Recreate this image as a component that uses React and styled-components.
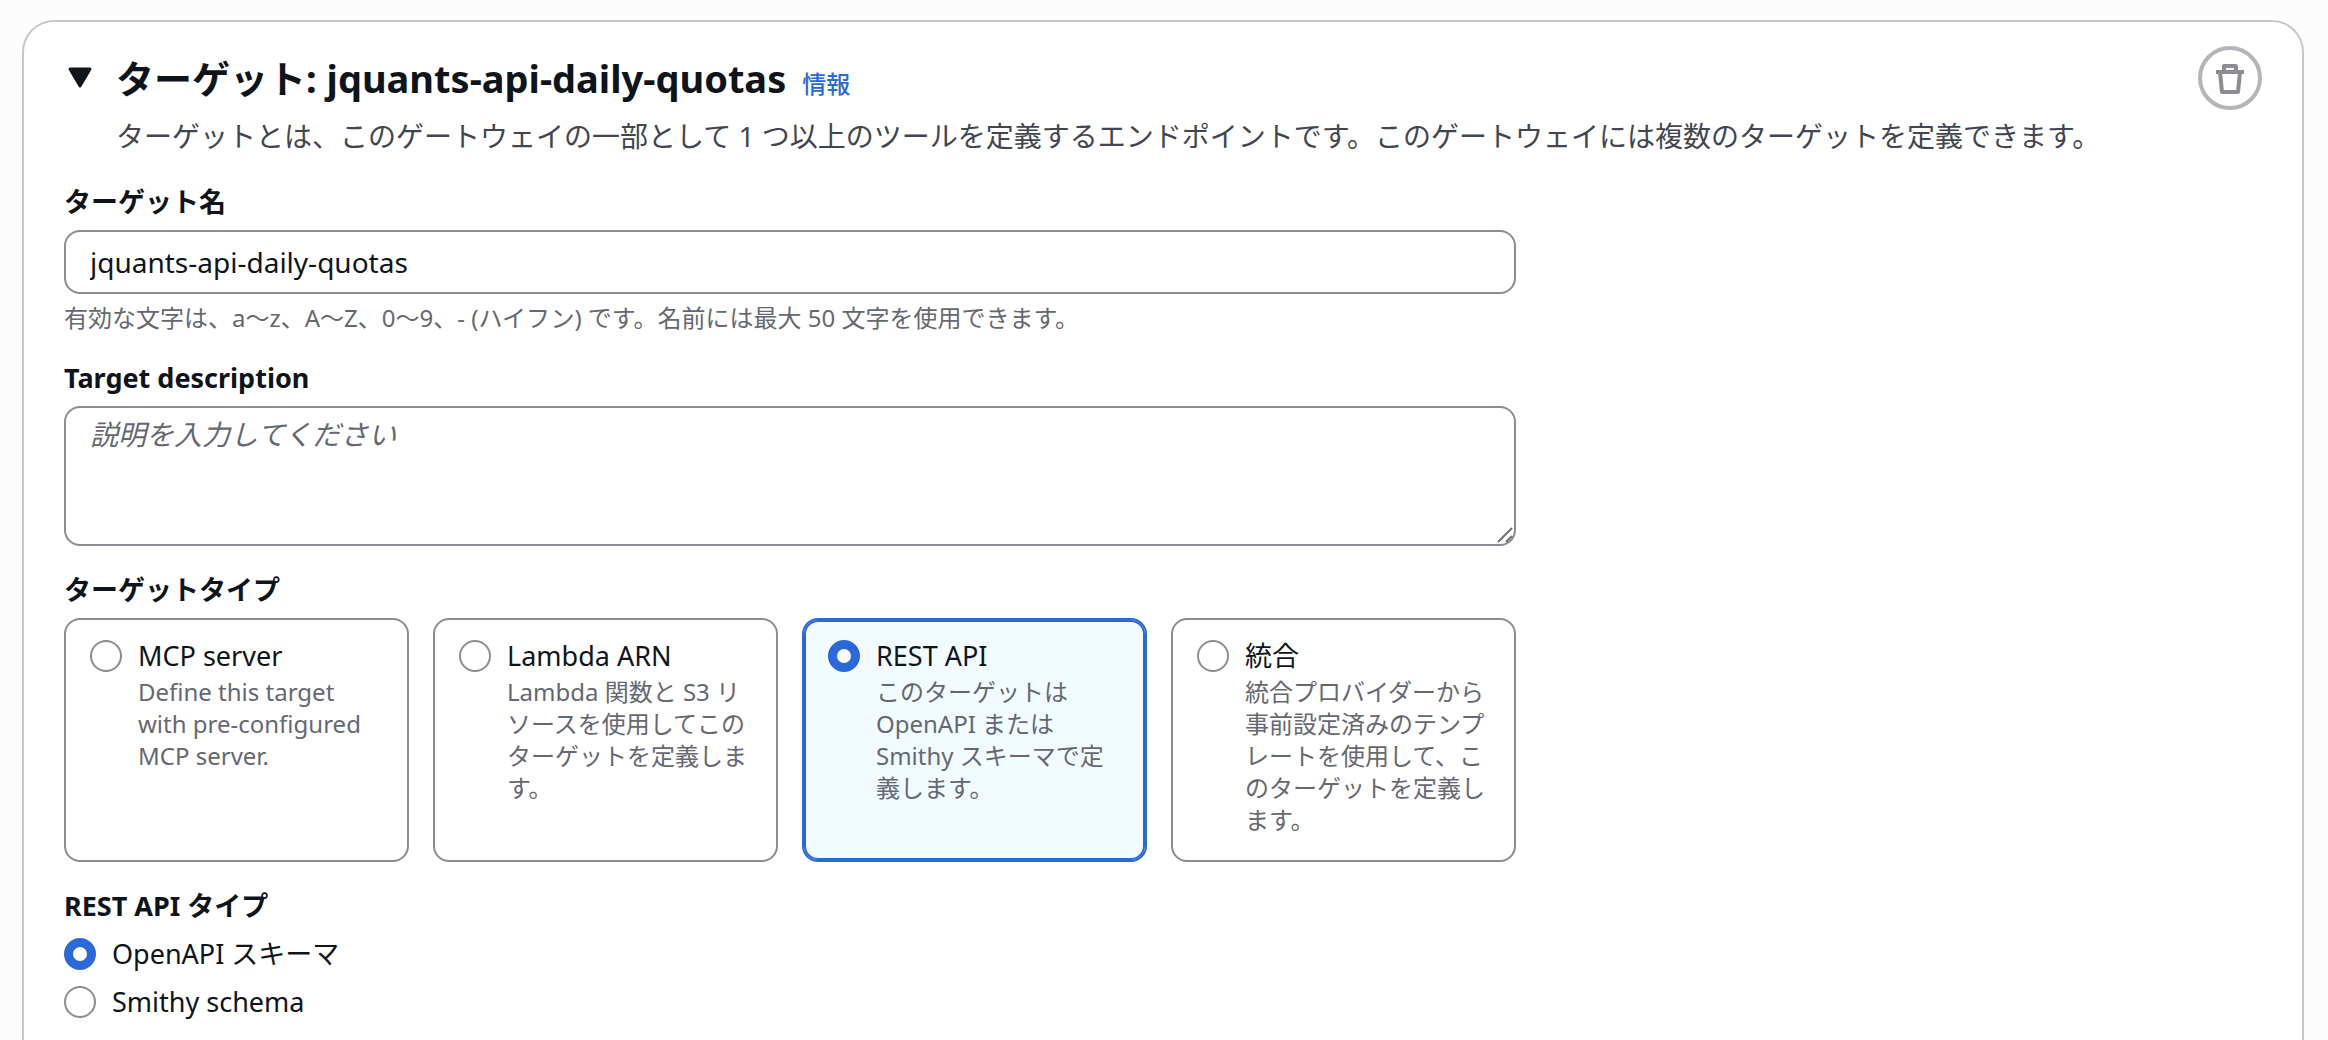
import { useState } from "react";
import styled, { createGlobalStyle } from "styled-components";

const targetTypes = [
  {
    id: "mcp",
    title: "MCP server",
    text: "Define this target with pre-configured MCP server.",
  },
  {
    id: "lambda",
    title: "Lambda ARN",
    text: "Lambda 関数と S3 リソースを使用してこのターゲットを定義します。",
  },
  {
    id: "rest",
    title: "REST API",
    text: "このターゲットは OpenAPI または Smithy スキーマで定義します。",
  },
  {
    id: "integration",
    title: "統合",
    text: "統合プロバイダーから事前設定済みのテンプレートを使用して、このターゲットを定義します。",
  },
];

const schemaTypes = [
  { id: "openapi", title: "OpenAPI スキーマ" },
  { id: "smithy", title: "Smithy schema" },
];

const App = () => {
  const [open, setOpen] = useState(true);
  const [name, setName] = useState("jquants-api-daily-quotas");
  const [description, setDescription] = useState("");
  const [targetType, setTargetType] = useState("rest");
  const [schemaType, setSchemaType] = useState("openapi");

  return (
    <Page>
      <GlobalStyle />
      <Panel>
        <Header>
          <Toggle
            type="button"
            aria-label="ターゲット"
            aria-expanded={open}
            onClick={() => setOpen(!open)}
          >
            <Caret $open={open} viewBox="0 0 28 24" aria-hidden="true">
              <path
                d="M4 3h20L14 20z"
                fill="currentColor"
                stroke="currentColor"
                strokeWidth="3"
                strokeLinejoin="round"
              />
            </Caret>
          </Toggle>
          <HeaderText>
            <TitleRow>
              <Title>ターゲット: {name}</Title>
              <InfoLink href="#info">情報</InfoLink>
            </TitleRow>
            <Description>
              ターゲットとは、このゲートウェイの一部として 1
              つ以上のツールを定義するエンドポイントです。このゲートウェイには複数のターゲットを定義できます。
            </Description>
          </HeaderText>
          <DeleteButton type="button" aria-label="削除">
            <svg width="32" height="32" viewBox="0 0 32 32" aria-hidden="true">
              <g fill="none" stroke="currentColor" strokeWidth="4">
                <path d="M2 10h28" />
                <path d="M10 10V4h12v6" strokeLinejoin="round" />
                <path d="M6 10l2 20h16l2-20" strokeLinejoin="round" />
              </g>
            </svg>
          </DeleteButton>
        </Header>

        {open && (
          <Columns>
            <Fields>
              <Field>
                <Label htmlFor="target-name">ターゲット名</Label>
                <TextInput
                  id="target-name"
                  value={name}
                  onChange={(e) => setName(e.target.value)}
                />
                <Hint>
                  有効な文字は、a〜z、A〜Z、0〜9、- (ハイフン)
                  です。名前には最大 50 文字を使用できます。
                </Hint>
              </Field>

              <Field>
                <Label htmlFor="target-description">Target description</Label>
                <AreaWrap>
                  <TextArea
                    id="target-description"
                    placeholder="説明を入力してください"
                    value={description}
                    onChange={(e) => setDescription(e.target.value)}
                  />
                  <Grip viewBox="0 0 18 18" aria-hidden="true">
                    <path d="M2 16L16 2M10 16l6-6" stroke="currentColor" strokeWidth="2" />
                  </Grip>
                </AreaWrap>
              </Field>

              <Group>
                <Legend>ターゲットタイプ</Legend>
                <Tiles>
                  {targetTypes.map((item) => (
                    <Tile key={item.id} $active={targetType === item.id}>
                      <Radio
                        type="radio"
                        name="target-type"
                        checked={targetType === item.id}
                        onChange={() => setTargetType(item.id)}
                      />
                      <div>
                        <OptionText>{item.title}</OptionText>
                        <TileText>{item.text}</TileText>
                      </div>
                    </Tile>
                  ))}
                </Tiles>
              </Group>

              <Group>
                <Legend>REST API タイプ</Legend>
                <RadioList>
                  {schemaTypes.map((item) => (
                    <RadioRow key={item.id}>
                      <Radio
                        type="radio"
                        name="schema-type"
                        checked={schemaType === item.id}
                        onChange={() => setSchemaType(item.id)}
                      />
                      <OptionText>{item.title}</OptionText>
                    </RadioRow>
                  ))}
                </RadioList>
              </Group>
            </Fields>
          </Columns>
        )}
      </Panel>
    </Page>
  );
};

const GlobalStyle = createGlobalStyle`
  *,
  *::before,
  *::after {
    box-sizing: border-box;
  }
  body {
    margin: 0;
    background: #fcfcfd;
    color: #0f141a;
    font-family: "Noto Sans", "Noto Sans CJK JP", sans-serif;
    font-size: 28px;
    line-height: 40px;
  }
  input,
  textarea,
  button {
    font: inherit;
    color: inherit;
  }
`;

const Page = styled.main`
  display: flex;
  flex-direction: column;
  min-height: 100vh;
  padding: 20px 24px 0 22px;
`;

const Panel = styled.section`
  flex: 1;
  padding: 24px 40px 12px;
  background: #ffffff;
  border: 2px solid #c6c6cd;
  border-bottom: none;
  border-radius: 32px 32px 0 0;
`;

const Header = styled.header`
  display: flex;
  align-items: flex-start;
  margin-bottom: 26px;
`;

const Toggle = styled.button`
  display: flex;
  align-items: center;
  justify-content: center;
  width: 32px;
  height: 64px;
  margin-right: 20px;
  padding: 0;
  background: none;
  border: none;
  cursor: pointer;
`;

const Caret = styled.svg`
  width: 28px;
  height: 24px;
  transform: ${({ $open }) => ($open ? "none" : "rotate(-90deg)")};
`;

const HeaderText = styled.div`
  flex: 1;
`;

const TitleRow = styled.div`
  display: flex;
  align-items: baseline;
  gap: 16px;
  height: 64px;
  margin-bottom: 6px;
`;

const Title = styled.h2`
  margin: 0;
  font-size: 38px;
  font-weight: 700;
  line-height: 64px;
`;

const InfoLink = styled.a`
  color: #2b69da;
  font-size: 24px;
  font-weight: 500;
  line-height: 32px;
  text-decoration: none;
`;

const Description = styled.p`
  margin: 0;
  color: #424650;
`;

const DeleteButton = styled.button`
  display: flex;
  align-items: center;
  justify-content: center;
  width: 64px;
  height: 64px;
  padding: 0;
  color: #8c8c94;
  background: #ffffff;
  border: 4px solid #b4b4bb;
  border-radius: 50%;
  cursor: pointer;
`;

const Columns = styled.div`
  display: grid;
  grid-template-columns: repeat(3, 1fr);
  gap: 40px;
`;

const Fields = styled.div`
  grid-column: span 2;
  display: flex;
  flex-direction: column;
  gap: 24px;
  min-width: 0;
`;

const Field = styled.div`
  display: flex;
  flex-direction: column;
`;

const Group = styled.fieldset`
  min-width: 0;
  margin: 0;
  padding: 0;
  border: none;
`;

const Label = styled.label`
  margin-bottom: 8px;
  font-size: 27px;
  font-weight: 700;
`;

const Legend = styled.legend`
  margin-bottom: 8px;
  padding: 0;
  font-size: 27px;
  font-weight: 700;
`;

const TextInput = styled.input`
  width: 100%;
  height: 64px;
  padding: 0 24px;
  background: #ffffff;
  border: 2px solid #8c8c94;
  border-radius: 16px;
`;

const Hint = styled.p`
  margin: 8px 0 0;
  color: #656871;
  font-size: 24px;
  line-height: 32px;
`;

const AreaWrap = styled.div`
  position: relative;
  display: flex;
`;

const TextArea = styled.textarea`
  width: 100%;
  height: 140px;
  padding: 6px 24px;
  background: #ffffff;
  border: 2px solid #8c8c94;
  border-radius: 16px;
  resize: vertical;
  &::placeholder {
    color: #656871;
    font-style: italic;
  }
  &::-webkit-resizer {
    background: transparent;
  }
`;

const Grip = styled.svg`
  position: absolute;
  right: 2px;
  bottom: 2px;
  width: 18px;
  height: 18px;
  color: #6e6e73;
  pointer-events: none;
`;

const Tiles = styled.div`
  display: grid;
  grid-template-columns: repeat(4, 1fr);
  gap: 24px;
`;

const Tile = styled.label`
  display: flex;
  align-items: flex-start;
  gap: 16px;
  padding: 16px 24px 24px;
  background: ${({ $active }) => ($active ? "#f2fbff" : "#ffffff")};
  border: 2px solid ${({ $active }) => ($active ? "#2b69da" : "#8c8c94")};
  border-radius: 16px;
  box-shadow: ${({ $active }) => ($active ? "inset 0 0 0 2px #2b69da" : "none")};
  cursor: pointer;
`;

const OptionText = styled.div`
  font-size: 27px;
  line-height: 40px;
`;

const TileText = styled.div`
  color: #656871;
  font-size: 24px;
  line-height: 32px;
`;

const RadioList = styled.div`
  display: flex;
  flex-direction: column;
  gap: 8px;
`;

const RadioRow = styled.label`
  display: flex;
  align-items: flex-start;
  gap: 16px;
  cursor: pointer;
`;

const Radio = styled.input`
  flex: none;
  appearance: none;
  width: 32px;
  height: 32px;
  margin: 4px 0;
  background: #ffffff;
  border: 2px solid #8c8c94;
  border-radius: 50%;
  &:checked {
    border: 9px solid #2b69da;
  }
`;

export default App;
